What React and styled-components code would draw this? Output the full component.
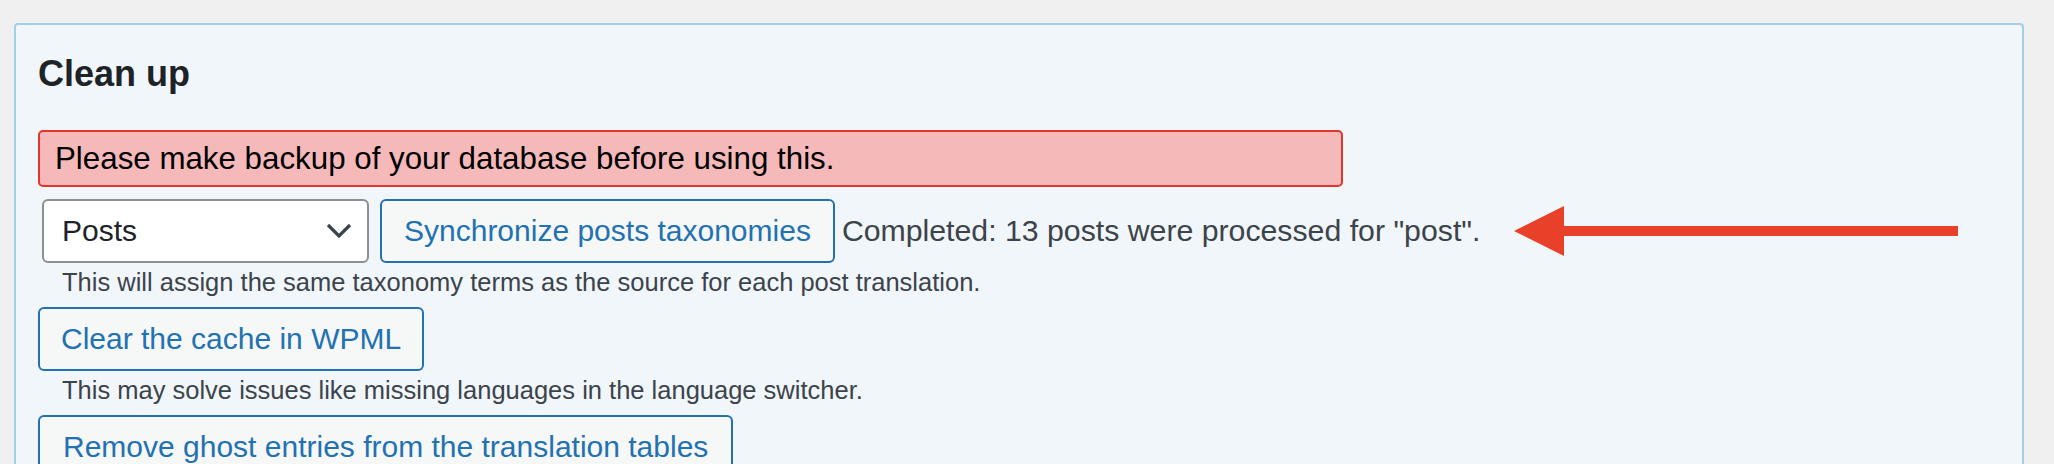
import styled, { createGlobalStyle } from "styled-components";

const Global = createGlobalStyle`
    html, body {
        margin: 0;
        padding: 0;
        background: #f0f0f1;
        overflow: hidden;
    }
    body {
        font-family: "Liberation Sans", Arial, sans-serif;
        color: #3c434a;
    }
`

// PAINEL
const Painel = styled.section`
    margin: 23px 30px 0 14px;
    min-height: 520px;
    background: #f0f6fa;
    border: 2px solid #a2d0e8;
    border-bottom: none;
    border-radius: 4px 4px 0 0;
    padding: 27px 22px 0 22px;
`
const Titulo = styled.h2`
    margin: 0 0 35px 0;
    font-size: 36px;
    line-height: 43px;
    font-weight: 700;
    color: #1d2327;
`
const Aviso = styled.div`
    width: 1305px;
    box-sizing: border-box;
    height: 57px;
    display: flex;
    align-items: center;
    padding: 0 15px;
    background: #f5b9b9;
    border: 2px solid #e2362b;
    border-radius: 5px;
    font-size: 31.3px;
    color: #000;
    margin-bottom: 12px;
`

// LINHAS
const Linha = styled.div`
    display: flex;
    align-items: center;
`
const Seletor = styled.div`
    box-sizing: border-box;
    width: 327px;
    height: 64px;
    margin: 0 11px 0 4px;
    background: #fff;
    border: 2px solid #8c8f94;
    border-radius: 6px;
    display: flex;
    align-items: center;
    justify-content: space-between;
    padding: 0 15px 0 18px;
    font-size: 30px;
    color: #1d2327;
`
const Botao = styled.button`
    box-sizing: border-box;
    height: 64px;
    padding: 0 ${(p) => p.$folga || 23}px;
    background: #f6f7f7;
    border: 2px solid #2271b1;
    border-radius: 6px;
    font-family: "Liberation Sans", Arial, sans-serif;
    font-size: 30px;
    color: #2271b1;
    white-space: nowrap;
    cursor: pointer;
`
const Status = styled.span`
    margin-left: 7px;
    font-size: 30.25px;
    color: #3c434a;
    white-space: nowrap;
`
const Seta = styled.svg`
    margin-left: 34px;
    flex-shrink: 0;
`
const Descricao = styled.p`
    margin: 2px 0 8px 24px;
    font-size: 25.5px;
    line-height: 34px;
    color: #3c434a;
`

function App() {
    return (
        <>
            <Global />
            <Painel>
                <Titulo>Clean up</Titulo>
                <Aviso>Please make backup of your database before using this.</Aviso>

                <Linha>
                    <Seletor>
                        <span>Posts</span>
                        <svg width="26" height="16" viewBox="0 0 26 16">
                            <path d="M2 2 L13 13 L24 2" fill="none" stroke="#3c434a" strokeWidth="3.2" />
                        </svg>
                    </Seletor>
                    <Botao $folga={22}>Synchronize posts taxonomies</Botao>
                    <Status>Completed: 13 posts were processed for "post".</Status>
                    <Seta width="444" height="50" viewBox="0 0 444 50">
                        <polygon points="0,25 50,0 50,50" fill="#e9402a" />
                        <rect x="48" y="20" width="396" height="10" fill="#e9402a" />
                    </Seta>
                </Linha>
                <Descricao>This will assign the same taxonomy terms as the source for each post translation.</Descricao>

                <Linha>
                    <Botao $folga={21}>Clear the cache in WPML</Botao>
                </Linha>
                <Descricao>This may solve issues like missing languages in the language switcher.</Descricao>

                <Linha>
                    <Botao>Remove ghost entries from the translation tables</Botao>
                </Linha>
            </Painel>
        </>
    )
}

export default App
